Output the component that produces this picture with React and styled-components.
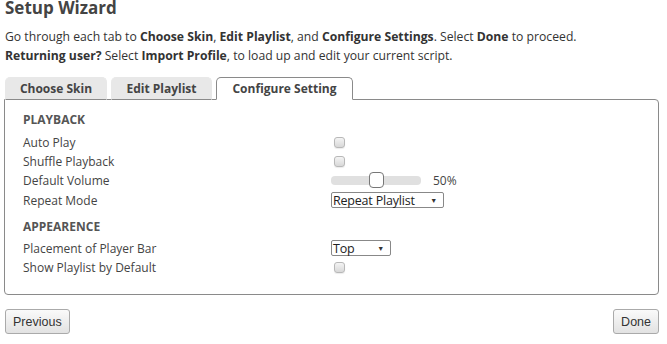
import styled, { createGlobalStyle } from 'styled-components';

const GlobalStyle = createGlobalStyle`
  html, body {
    margin: 0;
    padding: 0;
    background: #fff;
  }
  body {
    font-family: 'Open Sans', sans-serif;
    color: #333;
  }
`;

const Page = styled.div`
  width: 667px;
  height: 344px;
  overflow: hidden;
  box-sizing: border-box;
  padding: 0 8px 0 4px;
  display: flex;
  flex-direction: column;
`;

const Title = styled.h1`
  margin: 0 0 0 1px;
  font-size: 17px;
  line-height: 16px;
  font-weight: 700;
  color: #444;
`;

const Intro = styled.p`
  margin: 11px 0 0 1px;
  font-size: 12.2px;
  line-height: 19px;
  color: #333;

  b {
    font-weight: 700;
  }
`;

const Tabs = styled.div`
  display: flex;
  gap: 4px;
  margin-top: 12px;
  padding-left: 1px;
  position: relative;
  z-index: 1;
`;

const Tab = styled.div`
  box-sizing: border-box;
  width: ${p => p.$width}px;
  height: 23px;
  padding-top: 2px;
  text-align: center;
  font-size: 12px;
  font-weight: 700;
  color: #444;
  border-radius: 5px 5px 0 0;
  background: ${p => (p.$active ? '#fff' : '#e8e8e8')};
  border: 1px solid ${p => (p.$active ? '#8a8a8a' : '#e8e8e8')};
  border-bottom: ${p => (p.$active ? '1px solid #fff' : '1px solid #8a8a8a')};
  margin-bottom: -1px;
`;

const Panel = styled.div`
  box-sizing: border-box;
  height: 196px;
  border: 1px solid #8a8a8a;
  border-radius: 0 4px 4px 4px;
  padding: 11px 0 0 18px;
`;

const Section = styled.div`
  font-size: 12px;
  font-weight: 700;
  color: #555;
  line-height: 18px;
  margin: ${p => (p.$first ? '0 0 3.5px' : '8px 0 2.5px')};
`;

const Row = styled.div`
  display: grid;
  grid-template-columns: 308px auto;
  align-items: center;
  height: 19.4px;
  font-size: 12px;
  color: #444;
`;

const Control = styled.div`
  display: flex;
  align-items: center;
  gap: 12px;
`;

const Check = styled.span`
  box-sizing: border-box;
  width: 11px;
  height: 11px;
  margin-left: 3px;
  border: 1px solid #b8b8b8;
  border-radius: 3px;
  background: linear-gradient(#f4f4f4, #d8d8d8);
  box-shadow: 0 1px 1px rgba(0, 0, 0, 0.08);
`;

const Track = styled.div`
  position: relative;
  width: 90px;
  height: 9px;
  border-radius: 4px;
  background: #e0e0e0;
`;

const Thumb = styled.span`
  position: absolute;
  top: -4px;
  box-sizing: border-box;
  width: 15px;
  height: 16px;
  border: 1px solid #777;
  border-radius: 4px;
  background: #fff;
`;

const Percent = styled.span`
  font-size: 12px;
  color: #444;
`;

const Select = styled.div`
  box-sizing: border-box;
  width: ${p => p.$width}px;
  height: 16px;
  border: 1px solid #888;
  border-radius: 2px;
  display: flex;
  align-items: center;
  justify-content: space-between;
  padding: 0 6px 0 1px;
  font-size: 12.5px;
  letter-spacing: -0.2px;
  color: #222;

  &::after {
    content: '▼';
    font-size: 7px;
    color: #333;
  }
`;

const Footer = styled.div`
  display: flex;
  justify-content: space-between;
  margin-top: 14px;
  padding-left: 1px;
`;

const Button = styled.button`
  height: 25px;
  padding: 0 7px;
  font-family: 'Liberation Sans', Arial, sans-serif;
  font-size: 12.5px;
  color: #333;
  border: 1px solid #aaa;
  border-radius: 3px;
  background: linear-gradient(#fafafa, #e2e2e2);
`;

const Setting = ({ label, children }) => (
  <Row>
    <span>{label}</span>
    <Control>{children}</Control>
  </Row>
);

const App = () => {
  const volume = 50;
  return (
    <Page>
      <GlobalStyle />
      <Title>Setup Wizard</Title>
      <Intro>
        Go through each tab to <b>Choose Skin</b>, <b>Edit Playlist</b>, and <b>Configure Settings</b>. Select <b>Done</b> to proceed.
        <br />
        <b>Returning user?</b> Select <b>Import Profile</b>, to load up and edit your current script.
      </Intro>
      <Tabs>
        <Tab $width={102}>Choose Skin</Tab>
        <Tab $width={101}>Edit Playlist</Tab>
        <Tab $width={137} $active>Configure Setting</Tab>
      </Tabs>
      <Panel>
        <Section $first>PLAYBACK</Section>
        <Setting label="Auto Play"><Check /></Setting>
        <Setting label="Shuffle Playback"><Check /></Setting>
        <Setting label="Default Volume">
          <Track>
            <Thumb style={{ left: `${(volume / 100) * 90 - 7}px` }} />
          </Track>
          <Percent>{volume}%</Percent>
        </Setting>
        <Setting label="Repeat Mode"><Select $width={113}>Repeat Playlist</Select></Setting>
        <Section>APPEARENCE</Section>
        <Setting label="Placement of Player Bar"><Select $width={60}>Top</Select></Setting>
        <Setting label="Show Playlist by Default"><Check /></Setting>
      </Panel>
      <Footer>
        <Button>Previous</Button>
        <Button>Done</Button>
      </Footer>
    </Page>
  );
};

export default App;
